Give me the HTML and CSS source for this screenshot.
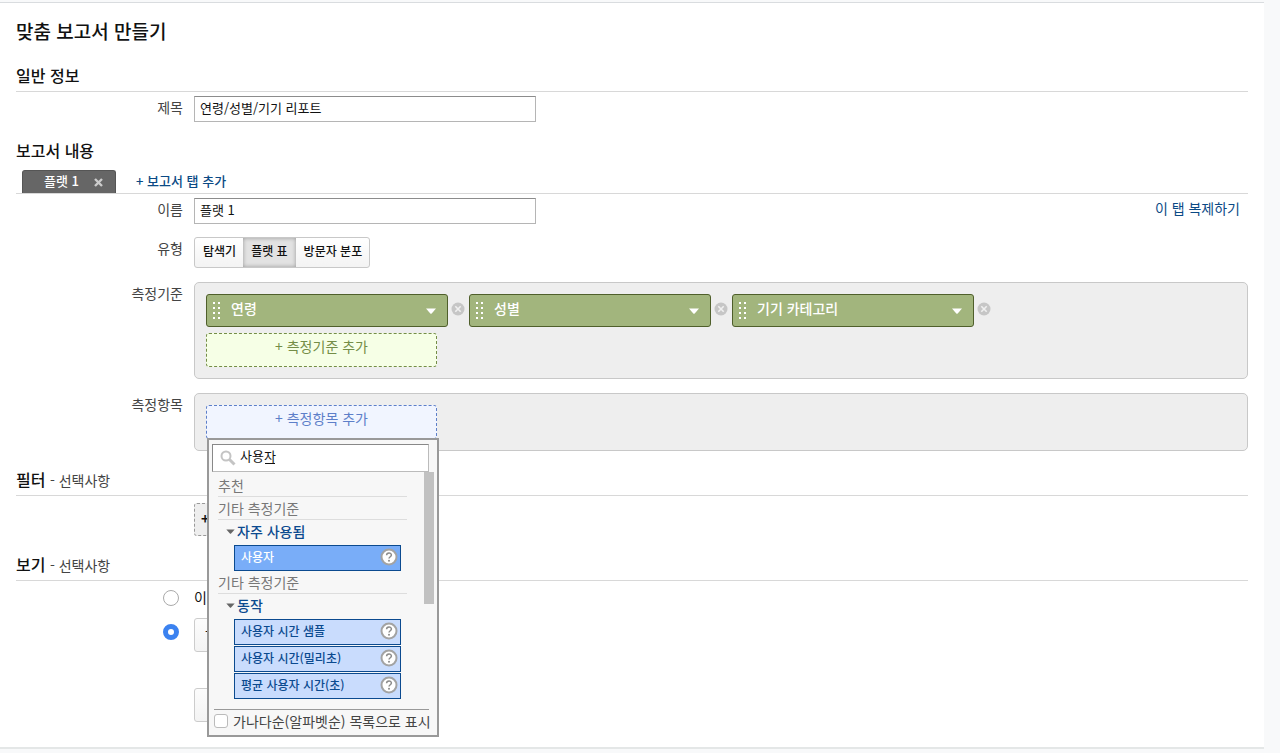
FILE: index.html
```html
<!DOCTYPE html>
<html lang="ko">
<head>
    <meta charset="UTF-8">
    <title>맞춤 보고서 만들기</title>
    <link rel="stylesheet" href="styles.css">
</head>
<body>

    <svg class="sprite" width="0" height="0">
        <symbol id="grip" viewBox="0 0 8 17">
            <path fill="currentColor" d="M0 0h2v2H0zM5 0h2v2H5zM0 5h2v2H0zM5 5h2v2H5zM0 10h2v2H0zM5 10h2v2H5zM0 15h2v2H0zM5 15h2v2H5z"/>
        </symbol>
        <symbol id="arrow" viewBox="0 0 10 6">
            <path fill="currentColor" d="M0 0.500h10L5.700 5.400Q5 6 4.300 5.400z"/>
        </symbol>
        <symbol id="remove" viewBox="0 0 14 14">
            <circle cx="7" cy="7" r="6.500" fill="#c6c6c6"/>
            <path d="M4.300 4.300l5.400 5.400M9.700 4.300l-5.400 5.400" stroke="#f0f0f0" stroke-width="1.600"/>
        </symbol>
        <symbol id="ring" viewBox="0 0 18 18">
            <circle cx="9" cy="9" r="7.500" fill="#fff" stroke="#a3a3a3" stroke-width="2"/>
            <path d="M6.600 7.300C6.600 4.300 11.400 4.300 11.400 7.100C11.400 8.800 9 8.700 9 10.600" fill="none" stroke="#8c8c8c" stroke-width="1.500"/>
            <circle cx="9" cy="12.700" r="1" fill="#8c8c8c"/>
        </symbol>
    </svg>

    <main class="panel">
        <h1>맞춤 보고서 만들기</h1>

        <section class="general">
            <h2>일반 정보</h2>
            <div class="row">
                <label class="name" for="title">제목</label>
                <input class="textbox" type="text" id="title" value="연령/성별/기기 리포트">
            </div>
        </section>

        <section class="content">
            <h2>보고서 내용</h2>
            <div class="tabs">
                <div class="tab">
                    <span>플랫 1</span>
                    <button type="button" class="closeTab" aria-label="탭 닫기">
                        <svg width="9" height="9" viewBox="0 0 9 9"><path d="M1 1l7 7M8 1L1 8" stroke="#ccc" stroke-width="2.400"/></svg>
                    </button>
                </div>
                <a class="addTab" href="#">+ 보고서 탭 추가</a>
            </div>

            <div class="row">
                <label class="name" for="tabName">이름</label>
                <input class="textbox" type="text" id="tabName" value="플랫 1">
                <a class="duplicate" href="#">이 탭 복제하기</a>
            </div>

            <div class="row typeRow">
                <span class="name">유형</span>
                <div class="segmented">
                    <button type="button">탐색기</button>
                    <button type="button" class="active">플랫 표</button>
                    <button type="button">방문자 분포</button>
                </div>
            </div>

            <div class="row boxRow">
                <span class="name">측정기준</span>
                <div class="box">
                    <div class="chips">
                        <button type="button" class="chip"><svg class="grip"><use href="#grip"/></svg><span>연령</span><svg class="arrow"><use href="#arrow"/></svg></button>
                        <button type="button" class="remove" aria-label="연령 삭제"><svg><use href="#remove"/></svg></button>
                        <button type="button" class="chip"><svg class="grip"><use href="#grip"/></svg><span>성별</span><svg class="arrow"><use href="#arrow"/></svg></button>
                        <button type="button" class="remove" aria-label="성별 삭제"><svg><use href="#remove"/></svg></button>
                        <button type="button" class="chip"><svg class="grip"><use href="#grip"/></svg><span>기기 카테고리</span><svg class="arrow"><use href="#arrow"/></svg></button>
                        <button type="button" class="remove" aria-label="기기 카테고리 삭제"><svg><use href="#remove"/></svg></button>
                    </div>
                    <button type="button" class="add addDimension">+ 측정기준 추가</button>
                </div>
            </div>

            <div class="row boxRow">
                <span class="name">측정항목</span>
                <div class="box metrics">
                    <button type="button" class="add addMetric">+ 측정항목 추가</button>

                    <div class="picker">
                        <div class="search">
                            <svg width="16" height="16" viewBox="0 0 16 16"><circle cx="6" cy="6" r="4.500" fill="none" stroke="#c4c4c4" stroke-width="2"/><path d="M9.500 9.500l5 5" stroke="#c4c4c4" stroke-width="3"/></svg>
                            <input type="text" value="사용자" aria-label="측정항목 검색">
                            <span class="composing"></span>
                        </div>
                        <div class="list">
                            <h3>추천</h3>
                            <h3>기타 측정기준</h3>
                            <button type="button" class="group"><svg><use href="#arrow"/></svg>자주 사용됨</button>
                            <ul>
                                <li><button type="button" class="item selected">사용자<svg><use href="#ring"/></svg></button></li>
                            </ul>
                            <h3>기타 측정기준</h3>
                            <button type="button" class="group"><svg><use href="#arrow"/></svg>동작</button>
                            <ul>
                                <li><button type="button" class="item">사용자 시간 샘플<svg><use href="#ring"/></svg></button></li>
                                <li><button type="button" class="item">사용자 시간(밀리초)<svg><use href="#ring"/></svg></button></li>
                                <li><button type="button" class="item">평균 사용자 시간(초)<svg><use href="#ring"/></svg></button></li>
                            </ul>
                            <span class="thumb"></span>
                        </div>
                        <label class="alphabetical"><input type="checkbox">가나다순(알파벳순) 목록으로 표시</label>
                    </div>
                </div>
            </div>
        </section>

        <section class="filters">
            <h2>필터 <small>- 선택사항</small></h2>
            <div class="row">
                <button type="button" class="addFilter">+</button>
            </div>
        </section>

        <section class="views">
            <h2>보기 <small>- 선택사항</small></h2>
            <div class="row viewRow">
                <input type="radio" name="view" id="viewThis">
                <label for="viewThis">이</label>
            </div>
            <div class="row viewRow">
                <input type="radio" name="view" aria-label="보기 선택" checked>
                <button type="button" class="plain">-</button>
            </div>
        </section>

        <div class="row actions">
            <button type="button" class="plain" aria-label="저장"></button>
        </div>
    </main>

</body>
</html>
```
FILE: styles.css
```css
* {
    box-sizing: border-box;
}

body {
    margin: 0;
    padding: 2px 16px 0 0;
    background: #f8f9fa;
    color: #444;
    font: 14px/20px "Noto Sans CJK KR", "Noto Sans", sans-serif;
}

button, input {
    margin: 0;
    font: inherit;
    color: inherit;
}

button {
    padding: 0;
    border: 0;
    background: none;
    white-space: nowrap;
}

a {
    color: #0b4a85;
    text-decoration: none;
}

ul {
    margin: 0;
    padding: 0;
    list-style: none;
}

svg {
    display: block;
    flex: none;
}

.sprite {
    position: absolute;
}

.panel {
    padding: 14px 16px 25px;
    background: #fff;
    border-top: 1px solid #d9dcdf;
    border-bottom: 2px solid #e4e7e7;
}

h1 {
    margin: 0;
    color: #111;
    font-size: 19px;
    font-weight: 500;
    line-height: 28px;
}

h2 {
    margin: 0;
    height: 27px;
    color: #111;
    font-size: 16px;
    font-weight: 500;
    line-height: 20px;
    border-bottom: 1px solid #d8d8d8;
}

h2 small {
    color: #444;
    font-size: 14px;
    font-weight: 400;
}

.general {
    padding-top: 20px;
}

.row {
    display: flex;
    align-items: flex-start;
    gap: 11px;
    padding-top: 4px;
}

.name {
    flex: none;
    width: 167px;
    padding-top: 1px;
    text-align: right;
}

.textbox {
    width: 342px;
    height: 26px;
    padding: 0 5px 3px;
    color: #111;
    font-size: 13px;
    background: #fff;
    border: 1px solid #b5b5b5;
    border-top-color: #8c8c8c;
}

/* report tabs */

.content {
    padding-top: 18px;
}

.content h2 {
    border: 0;
}

.tabs {
    display: flex;
    gap: 20px;
    height: 27px;
    padding: 3px 0 0 6px;
    border-bottom: 1px solid #d8d8d8;
}

.tab {
    display: flex;
    align-items: center;
    gap: 15px;
    width: 94px;
    padding: 0 0 2px 21px;
    color: #fff;
    font-size: 13px;
    font-weight: 500;
    background: #666;
    border: 1px solid #555;
    border-bottom: 0;
    border-radius: 3px 3px 0 0;
}

.closeTab {
    padding-top: 2px;
}

.addTab {
    font-size: 13px;
    font-weight: 500;
    line-height: 22px;
}

.duplicate {
    margin-left: auto;
    padding-right: 8px;
}

.typeRow {
    padding-top: 13px;
}

.segmented {
    display: flex;
    height: 31px;
    color: #111;
    font-size: 12px;
    font-weight: 500;
    background: linear-gradient(#fff, #f3f3f3);
    border: 1px solid #c8c8c8;
    border-radius: 3px;
}

.segmented button {
    padding: 0 7px 3px 8px;
}

.segmented .active {
    padding-right: 8px;
    background: #e2e2e2;
    box-shadow: inset 0 0 4px #999;
}

/* dimensions and metrics */

.boxRow {
    padding-top: 14px;
}

.box {
    flex: 1;
    padding: 11px;
    background: #eee;
    border: 1px solid #c8c8c8;
    border-radius: 5px;
}

.chips {
    display: flex;
    align-items: center;
    padding-bottom: 6px;
}

.chip {
    display: flex;
    align-items: center;
    width: 242px;
    height: 33px;
    padding: 0 11px 0 6px;
    color: #fff;
    font-weight: 500;
    text-align: left;
    background: #a2b57d;
    border: 1px solid #4f5f2b;
    border-radius: 3px;
}

.chip span {
    flex: 1;
    padding: 0 0 6px 10px;
}

.grip {
    width: 8px;
    height: 17px;
}

.arrow {
    width: 10px;
    height: 6px;
}

.remove {
    padding: 0 4px 3px 3px;
}

.remove svg {
    width: 14px;
    height: 14px;
}

.add {
    display: block;
    width: 231px;
    height: 34px;
    padding-bottom: 8px;
    border: 1px dashed;
    border-radius: 3px;
}

.addDimension {
    color: #748d47;
    background: #f6ffe6;
}

.addMetric {
    color: #5d7fc9;
    background: #f1f5ff;
}

.metrics {
    position: relative;
}

/* drop-down of metrics, lies over the rest of the form */

.picker {
    position: absolute;
    top: 44px;
    left: 12px;
    z-index: 1;
    width: 232px;
    padding: 4px 3px 4px;
    background: #f7f7f7;
    border: 2px solid #999;
}

.search {
    position: relative;
    display: flex;
    align-items: center;
    width: 217px;
    height: 28px;
    padding-left: 7px;
    background: #fff;
    border: 1px solid #bbb;
    border-top-color: #888;
    border-left-color: #888;
}

.search input {
    width: 180px;
    padding: 0 0 5px 4px;
    color: #111;
    font-size: 13px;
    border: 0;
    outline: 0;
    background: none;
}

.composing {
    position: absolute;
    left: 52px;
    bottom: 7px;
    width: 10px;
    height: 1px;
    background: #111;
}

.list {
    position: relative;
    height: 237px;
    padding: 2px 27px 0 6px;
}

.list h3 {
    margin: 0;
    height: 23px;
    padding-top: 1px;
    color: #777;
    font-size: 14px;
    font-weight: 400;
    border-bottom: 1px solid #ddd;
}

.group {
    display: flex;
    align-items: center;
    gap: 2px;
    height: 25px;
    padding: 0 0 3px 8px;
    color: #0b4a8f;
    font-weight: 500;
}

.group svg {
    width: 9px;
    height: 5px;
    color: #666;
}

.list ul {
    display: grid;
    gap: 1px;
    width: 167px;
    margin-left: 16px;
}

.item {
    display: flex;
    align-items: center;
    justify-content: space-between;
    width: 100%;
    height: 26px;
    padding: 0 2px 3px 6px;
    color: #0b4a8f;
    font-size: 12px;
    font-weight: 500;
    background: #c9dcfd;
    border: 1px solid #0b4a8f;
}

.item.selected {
    color: #fff;
    background: #79adf8;
}

.item svg {
    width: 18px;
    height: 18px;
}

.thumb {
    position: absolute;
    top: 0;
    right: 0;
    width: 10px;
    height: 132px;
    background: #c1c1c1;
}

.alphabetical {
    display: flex;
    align-items: center;
    gap: 5px;
    width: 215px;
    margin-left: 2px;
    padding-top: 1px;
    white-space: nowrap;
    border-top: 1px solid #999;
}

/* inputs drawn by hand so that they look the same everywhere */

.alphabetical input {
    appearance: none;
    flex: none;
    width: 14px;
    height: 14px;
    background: #fff;
    border: 1px solid #bbb;
    border-radius: 3px;
}

.viewRow input {
    appearance: none;
    width: 16px;
    height: 16px;
    margin-top: 3px;
    background: #fff;
    border: 1px solid #aaa;
    border-radius: 50%;
}

.viewRow input:checked {
    margin-top: 6px;
    border: 5px solid #3b82f0;
}

.filters {
    padding-top: 18px;
}

.filters .row {
    padding: 7px 0 0 178px;
}

.addFilter {
    width: 90px;
    height: 33px;
    padding: 0 0 3px 6px;
    color: #111;
    font-weight: 700;
    text-align: left;
    background: #eee;
    border: 1px dashed #999;
    border-radius: 3px;
}

.views {
    padding-top: 18px;
}

.viewRow {
    gap: 15px;
    padding: 6px 0 0 147px;
}

.viewRow label {
    color: #111;
}

.viewRow + .viewRow {
    padding-top: 11px;
}

.plain {
    width: 90px;
    height: 34px;
    padding: 0 0 8px 10px;
    color: #111;
    text-align: left;
    background: linear-gradient(#fcfcfc, #f3f3f3);
    border: 1px solid #ccc;
    border-radius: 3px;
}

.actions {
    padding: 36px 0 0 178px;
}
```
